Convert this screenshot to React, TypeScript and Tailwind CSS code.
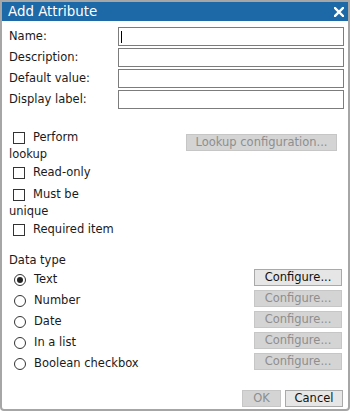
import React from "react";

function Checkbox({ lines }: { lines: string[] }) {
  return (
    <div className="flex flex-col">
      <div className="h-[20px] flex items-center pl-[4px]">
        <span className="w-[12px] h-[12px] border border-[#333333] bg-white shrink-0" />
        <span className="ml-[8px] whitespace-nowrap">{lines[0]}</span>
      </div>
      {lines[1] && <div className="h-[13px] leading-[13px] whitespace-nowrap">{lines[1]}</div>}
    </div>
  );
}

function Btn({ label, disabled, className }: { label: string; disabled?: boolean; className: string }) {
  return (
    <div
      className={
        "h-[17px] flex items-center justify-center border whitespace-nowrap " +
        (disabled
          ? "bg-[#d4d4d4] border-[#c6c6c6] text-[#8e8e8e] "
          : "bg-[#e6e6e6] border-[#a9a9a9] text-[#111111] ") +
        className
      }
    >
      {label}
    </div>
  );
}

function Radio({ label, checked }: { label: string; checked?: boolean }) {
  return (
    <div className="h-[21px] flex items-start justify-between pr-[6px]">
      <div className="flex items-center pl-[5px] pt-[4px]">
        <span className="w-[12px] h-[12px] rounded-full border border-[#333333] bg-white flex items-center justify-center shrink-0">
          {checked && <span className="w-[6px] h-[6px] rounded-full bg-[#222222]" />}
        </span>
        <span className="ml-[8px] leading-[13px] whitespace-nowrap">{label}</span>
      </div>
      <Btn label="Configure..." disabled={!checked} className="w-[88px]" />
    </div>
  );
}

export default function App() {
  const fields = ["Name:", "Description:", "Default value:", "Display label:"];
  return (
    <div className="w-[352px] h-[413px] bg-white font-['Verdana','DejaVu_Sans',sans-serif] text-[11.5px] text-[#1a1a1a]">
      <div className="w-[350px] h-[411px] border-2 border-[#a6a6a6] rounded-b-[4px] flex flex-col overflow-hidden bg-white">
        <div className="h-[19px] bg-[#1d69a7] flex items-center justify-between pl-[6px] pr-[3px] shrink-0">
          <span className="text-white text-[13.4px] leading-[15px]">Add Attribute</span>
          <svg width="10" height="10" viewBox="0 0 10 10" className="mr-[1px]">
            <path d="M1 1 L9 9 M9 1 L1 9" stroke="white" strokeWidth="2.4" strokeLinecap="square" />
          </svg>
        </div>
        <div className="flex flex-col pl-[7px] pt-[6px]">
          <div className="flex flex-col gap-[2px]">
            {fields.map((f, i) => (
              <div key={f} className="h-[19px] flex items-center">
                <span className="w-[109px] whitespace-nowrap">{f}</span>
                <div className="w-[226px] h-[19px] border border-[#7c7c7c] bg-white flex items-center">
                  {i === 0 && <span className="ml-[2px] w-[1px] h-[12px] bg-black" />}
                </div>
              </div>
            ))}
          </div>

          <div className="mt-[19px] flex">
            <div className="w-[177px] flex flex-col gap-[2px]">
              <Checkbox lines={["Perform", "lookup"]} />
              <Checkbox lines={["Read-only"]} />
              <Checkbox lines={["Must be", "unique"]} />
              <Checkbox lines={["Required item"]} />
            </div>
            <div className="pt-[6px]">
              <Btn label="Lookup configuration..." disabled className="w-[151px]" />
            </div>
          </div>

          <div className="mt-[13px] h-[14px] leading-[14px]">Data type</div>
          <div className="mt-[2px] flex flex-col">
            <Radio label="Text" checked />
            <Radio label="Number" />
            <Radio label="Date" />
            <Radio label="In a list" />
            <Radio label="Boolean checkbox" />
          </div>

          <div className="mt-[16px] flex justify-end gap-[4px] pr-[5px]">
            <Btn label="OK" disabled className="w-[39px]" />
            <Btn label="Cancel" className="w-[58px]" />
          </div>
        </div>
      </div>
    </div>
  );
}
